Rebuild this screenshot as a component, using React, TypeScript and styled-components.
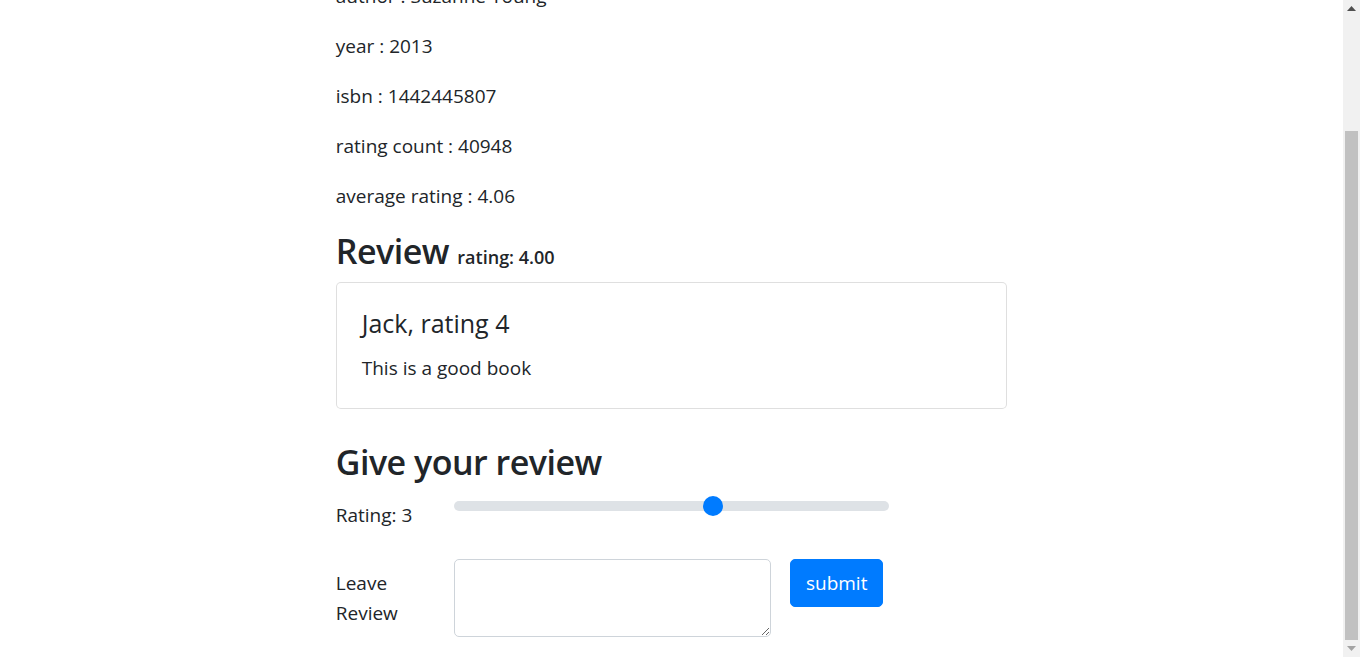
import React, { useState } from "react";
import styled, { createGlobalStyle } from "styled-components";

const GlobalStyle = createGlobalStyle`
  *, *::before, *::after { box-sizing: border-box; }
  html, body { height: 100%; }
  body {
    margin: 0;
    overflow: hidden;
    font-family: "Open Sans", "Noto Sans", "Liberation Sans", sans-serif;
    font-size: 19px;
    line-height: 30px;
    color: #212529;
    background: #ffffff;
  }
`;

const Window = styled.div`
  display: flex;
  height: 100vh;
  overflow: hidden;
`;

const Viewport = styled.div`
  flex: 1 1 auto;
  min-width: 0;
  overflow: hidden;
`;

/* the page is shown scrolled to its bottom: the first line sits partly above the fold */
const Page = styled.main<{ $scroll: number }>`
  width: 50%;
  margin: ${(p) => -p.$scroll}px auto 0;
`;

const InfoLine = styled.p`
  margin: 0 0 20px;
`;

const SectionTitle = styled.h2<{ $top: number; $bottom: number }>`
  margin: ${(p) => p.$top}px 0 ${(p) => p.$bottom}px;
  font-size: 34px;
  line-height: 40px;
  font-weight: 600;
  letter-spacing: -0.5px;
`;

const Aside = styled.span`
  font-size: 18px;
  font-weight: 600;
  letter-spacing: 0;
`;

const Card = styled.section`
  border: 1px solid rgba(0, 0, 0, 0.125);
  border-radius: 5px;
  padding: 25px;
  background: #fff;
`;

const CardTitle = styled.h5`
  margin: 0 0 15px;
  font-size: 25px;
  line-height: 30px;
  font-weight: 500;
`;

const CardText = styled.p`
  margin: 0;
`;

const FormRow = styled.div`
  display: flex;
  align-items: flex-start;
  margin-bottom: 20px;
`;

const Label = styled.label<{ $padTop: number; $nowrap?: boolean }>`
  flex: 0 0 80.7px;
  margin-right: 37.5px;
  padding: ${(p) => p.$padTop}px 0 9px;
  line-height: 30px;
  white-space: ${(p) => (p.$nowrap ? "nowrap" : "normal")};
`;

const Range = styled.input`
  flex: 0 0 435px;
  width: 435px;
  height: 28px;
  margin: 0;
  padding: 0;
  background: transparent;
  -webkit-appearance: none;
  appearance: none;
  &:focus { outline: none; }
  &::-webkit-slider-runnable-track {
    height: 10px;
    background: #dee2e6;
    border-radius: 10px;
    border: 0;
  }
  &::-webkit-slider-thumb {
    -webkit-appearance: none;
    appearance: none;
    width: 20px;
    height: 20px;
    margin-top: -5px;
    border-radius: 50%;
    background: #007bff;
    border: 0;
  }
`;

const TextArea = styled.textarea`
  flex: 0 0 317px;
  width: 317px;
  height: 78px;
  margin: 0 19px 0 0;
  padding: 7.5px 15px;
  font: inherit;
  color: #495057;
  border: 1px solid #ced4da;
  border-radius: 5px;
  background: #fff;
`;

const SubmitButton = styled.button`
  height: 48px;
  padding: 0 15px;
  font-family: inherit;
  font-size: 19px;
  line-height: 30px;
  color: #fff;
  background: #007bff;
  border: 1px solid #007bff;
  border-radius: 5px;
  cursor: pointer;
`;

/* browser scrollbar, drawn */
const ScrollBar = styled.div`
  flex: 0 0 17px;
  display: flex;
  flex-direction: column;
  background: #f1f1f1;
`;

const ArrowBox = styled.div`
  flex: 0 0 17px;
  display: flex;
  align-items: center;
  justify-content: center;
`;

const Track = styled.div<{ $before: number }>`
  flex: 1 1 auto;
  padding: ${(p) => p.$before}px 2px 0;
`;

const Thumb = styled.div<{ $size: number }>`
  height: ${(p) => p.$size}px;
  background: #c1c1c1;
`;

const Arrow = ({ up, color }: { up?: boolean; color: string }) => (
  <svg width="9" height="5" viewBox="0 0 9 5" aria-hidden="true">
    <path d={up ? "M0 5 L4.5 0 L9 5 Z" : "M0 0 L4.5 5 L9 0 Z"} fill={color} />
  </svg>
);

const info = [
  ["author", "Suzanne Young"],
  ["year", "2013"],
  ["isbn", "1442445807"],
  ["rating count", "40948"],
  ["average rating", "4.06"],
];

export default function App() {
  const [rating, setRating] = useState(3);
  const [text, setText] = useState("");

  return (
    <>
      <GlobalStyle />
      <Window>
        <Viewport>
          <Page $scroll={19}>
            {info.map(([k, v]) => (
              <InfoLine key={k}>
                {k} : {v}
              </InfoLine>
            ))}
            <SectionTitle $top={4} $bottom={4.5}>
              Review <Aside>rating: 4.00</Aside>
            </SectionTitle>
            <Card>
              <CardTitle>Jack, rating 4</CardTitle>
              <CardText>This is a good book</CardText>
            </Card>
            <SectionTitle $top={33} $bottom={10}>
              Give your review
            </SectionTitle>
            <FormRow>
              <Label $padTop={8.3} $nowrap htmlFor="rating">
                Rating: {rating}
              </Label>
              <Range
                id="rating"
                type="range"
                min={0}
                max={5}
                step={1}
                value={rating}
                onChange={(e) => setRating(Number(e.target.value))}
              />
            </FormRow>
            <FormRow>
              <Label $padTop={9.3} htmlFor="review">
                Leave Review
              </Label>
              <TextArea id="review" rows={2} value={text} onChange={(e) => setText(e.target.value)} />
              <SubmitButton type="button">submit</SubmitButton>
            </FormRow>
          </Page>
        </Viewport>
        <ScrollBar>
          <ArrowBox>
            <Arrow up color="#505050" />
          </ArrowBox>
          <Track $before={114}>
            <Thumb $size={509} />
          </Track>
          <ArrowBox>
            <Arrow color="#a3a3a3" />
          </ArrowBox>
        </ScrollBar>
      </Window>
    </>
  );
}
